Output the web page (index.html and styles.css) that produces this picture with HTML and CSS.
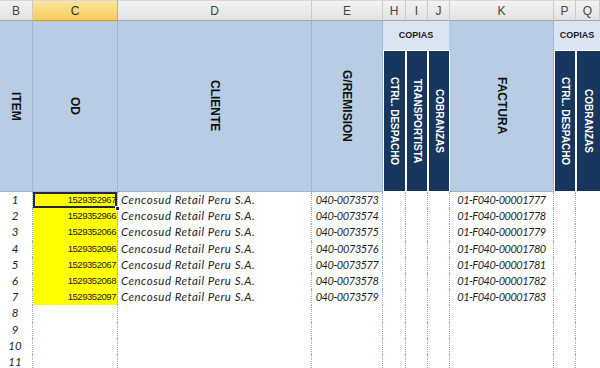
FILE: index.html
```html
<!DOCTYPE html>
<html lang="es">
<head>
<meta charset="utf-8">
<title>Control de despachos</title>
<link rel="stylesheet" href="styles.css">
</head>
<body>
<div class="sheet">
  <!-- column letters -->
  <div class="col-h">B</div>
  <div class="col-h col-h-sel">C</div>
  <div class="col-h">D</div>
  <div class="col-h">E</div>
  <div class="col-h">H</div>
  <div class="col-h">I</div>
  <div class="col-h">J</div>
  <div class="col-h">K</div>
  <div class="col-h">P</div>
  <div class="col-h">Q</div>

  <!-- table header -->
  <div class="th th-tall"><span class="rot">ITEM</span></div>
  <div class="th th-tall"><span class="rot">OD</span></div>
  <div class="th th-tall"><span class="rot">CLIENTE</span></div>
  <div class="th th-tall"><span class="rot">G/REMISION</span></div>
  <div class="th-group span-3">COPIAS</div>
  <div class="th th-tall"><span class="rot">FACTURA</span></div>
  <div class="th-group span-2 th-last">COPIAS</div>
  <div class="th-dark"><span class="rot">CTRL. DESPACHO</span></div>
  <div class="th-dark"><span class="rot">TRANSPORTISTA</span></div>
  <div class="th-dark th-dark-end"><span class="rot">COBRANZAS</span></div>
  <div class="th-dark"><span class="rot">CTRL. DESPACHO</span></div>
  <div class="th-dark th-last"><span class="rot">COBRANZAS</span></div>

  <!-- rows -->
  <div class="td num">1</div><div class="td od od-fill sel">1529352967</div><div class="td cli">Cencosud Retail Peru S.A.</div><div class="td guia">040-0073573</div><div class="td"></div><div class="td"></div><div class="td"></div><div class="td fact">01-F040-00001777</div><div class="td"></div><div class="td td-last"></div>
  <div class="td num">2</div><div class="td od od-fill">1529352966</div><div class="td cli">Cencosud Retail Peru S.A.</div><div class="td guia">040-0073574</div><div class="td"></div><div class="td"></div><div class="td"></div><div class="td fact">01-F040-00001778</div><div class="td"></div><div class="td td-last"></div>
  <div class="td num">3</div><div class="td od od-fill">1529352066</div><div class="td cli">Cencosud Retail Peru S.A.</div><div class="td guia">040-0073575</div><div class="td"></div><div class="td"></div><div class="td"></div><div class="td fact">01-F040-00001779</div><div class="td"></div><div class="td td-last"></div>
  <div class="td num">4</div><div class="td od od-fill">1529352096</div><div class="td cli">Cencosud Retail Peru S.A.</div><div class="td guia">040-0073576</div><div class="td"></div><div class="td"></div><div class="td"></div><div class="td fact">01-F040-00001780</div><div class="td"></div><div class="td td-last"></div>
  <div class="td num">5</div><div class="td od od-fill">1529352067</div><div class="td cli">Cencosud Retail Peru S.A.</div><div class="td guia">040-0073577</div><div class="td"></div><div class="td"></div><div class="td"></div><div class="td fact">01-F040-00001781</div><div class="td"></div><div class="td td-last"></div>
  <div class="td num">6</div><div class="td od od-fill">1529352068</div><div class="td cli">Cencosud Retail Peru S.A.</div><div class="td guia">040-0073578</div><div class="td"></div><div class="td"></div><div class="td"></div><div class="td fact">01-F040-00001782</div><div class="td"></div><div class="td td-last"></div>
  <div class="td num">7</div><div class="td od od-fill">1529352097</div><div class="td cli">Cencosud Retail Peru S.A.</div><div class="td guia">040-0073579</div><div class="td"></div><div class="td"></div><div class="td"></div><div class="td fact">01-F040-00001783</div><div class="td"></div><div class="td td-last"></div>
  <div class="td num">8</div><div class="td od"></div><div class="td cli"></div><div class="td guia"></div><div class="td"></div><div class="td"></div><div class="td"></div><div class="td fact"></div><div class="td"></div><div class="td td-last"></div>
  <div class="td num">9</div><div class="td od"></div><div class="td cli"></div><div class="td guia"></div><div class="td"></div><div class="td"></div><div class="td"></div><div class="td fact"></div><div class="td"></div><div class="td td-last"></div>
  <div class="td num">10</div><div class="td od"></div><div class="td cli"></div><div class="td guia"></div><div class="td"></div><div class="td"></div><div class="td"></div><div class="td fact"></div><div class="td"></div><div class="td td-last"></div>
  <div class="td num">11</div><div class="td od"></div><div class="td cli"></div><div class="td guia"></div><div class="td"></div><div class="td"></div><div class="td"></div><div class="td fact"></div><div class="td"></div><div class="td td-last"></div>
</div>
</body>
</html>
```
FILE: styles.css
```css
html, body {
  margin: 0;
  padding: 0;
  background: #ffffff;
  overflow: hidden;
}

.sheet {
  width: 600px;
  height: 368px;
  overflow: hidden;
  display: grid;
  grid-template-columns: 33px 85px 194px 71px 23px 22px 22px 104px 22px 24px;
  grid-template-rows: 21px 29px 142px repeat(11, 16.2px);
  font-family: "Liberation Sans", Arial, sans-serif;
}

/* column letters strip */
.col-h {
  background: linear-gradient(#f3f3f3, #e2e2e2);
  border-right: 1px solid #c9c9c9;
  border-bottom: 1px solid #a9a9a9;
  border-top: 1px solid #d8d8d8;
  color: #454545;
  font-size: 12px;
  display: flex;
  align-items: center;
  justify-content: center;
  box-sizing: border-box;
}

.col-h-sel {
  background: linear-gradient(#fbe59b, #f6cc5a);
  border-right-color: #e2b13c;
  border-bottom-color: #d29a24;
  color: #2e2e2e;
}

/* header band */
.th {
  background: #b8cce4;
  border-right: 1px dotted #7fa2cc;
  border-bottom: 1px dotted #7fa2cc;
  box-sizing: border-box;
  display: flex;
  align-items: center;
  justify-content: center;
  font-weight: bold;
  font-size: 12px;
  color: #111;
}

.th-tall {
  grid-row: span 2;
}

.rot {
  writing-mode: vertical-rl;
  white-space: nowrap;
}

.th-group {
  background: #dbe5f1;
  border-right: 1px dotted #9db6d6;
  box-sizing: border-box;
  display: flex;
  align-items: center;
  justify-content: center;
  font-weight: bold;
  font-size: 9px;
  color: #1a1a1a;
  padding-bottom: 2px;
}

.span-3 { grid-column: span 3; }
.span-2 { grid-column: span 2; }

.th-dark {
  background: #17375e;
  border: 1px solid #ffffff;
  box-sizing: border-box;
  display: flex;
  align-items: center;
  justify-content: center;
  color: #ffffff;
  font-weight: bold;
  font-size: 10px;
}

.th-last { border-right: none; }

/* data rows */
.td {
  border-right: 1px dotted #8eaacc;
  box-sizing: border-box;
  font-family: "Lato", "DejaVu Sans", sans-serif;
  font-style: italic;
  font-size: 11.5px;
  color: #1e1e1e;
  white-space: nowrap;
  overflow: visible;
  line-height: 16px;
}

.td-last { border-right: none; }

.num {
  text-align: center;
  padding-right: 2px;
}

.od {
  font-family: "Liberation Sans", Arial, sans-serif;
  font-style: normal;
  font-size: 9.5px;
  letter-spacing: -0.45px;
  text-align: right;
  padding-right: 1px;
  color: #222;
}

.od-fill {
  background: #ffff00;
}

.sel {
  position: relative;
  box-shadow: inset 0 0 0 2px #252545;
}

.sel::after {
  content: "";
  position: absolute;
  right: -3px;
  bottom: -3px;
  width: 5px;
  height: 5px;
  background: #252545;
  border: 1px solid #ffffff;
  box-sizing: border-box;
}

.cli {
  padding-left: 3px;
  letter-spacing: 0.5px;
}

.guia {
  text-align: center;
  font-size: 11px;
  letter-spacing: -0.45px;
}

.fact {
  text-align: center;
  font-size: 11px;
  letter-spacing: -0.5px;
}
```
